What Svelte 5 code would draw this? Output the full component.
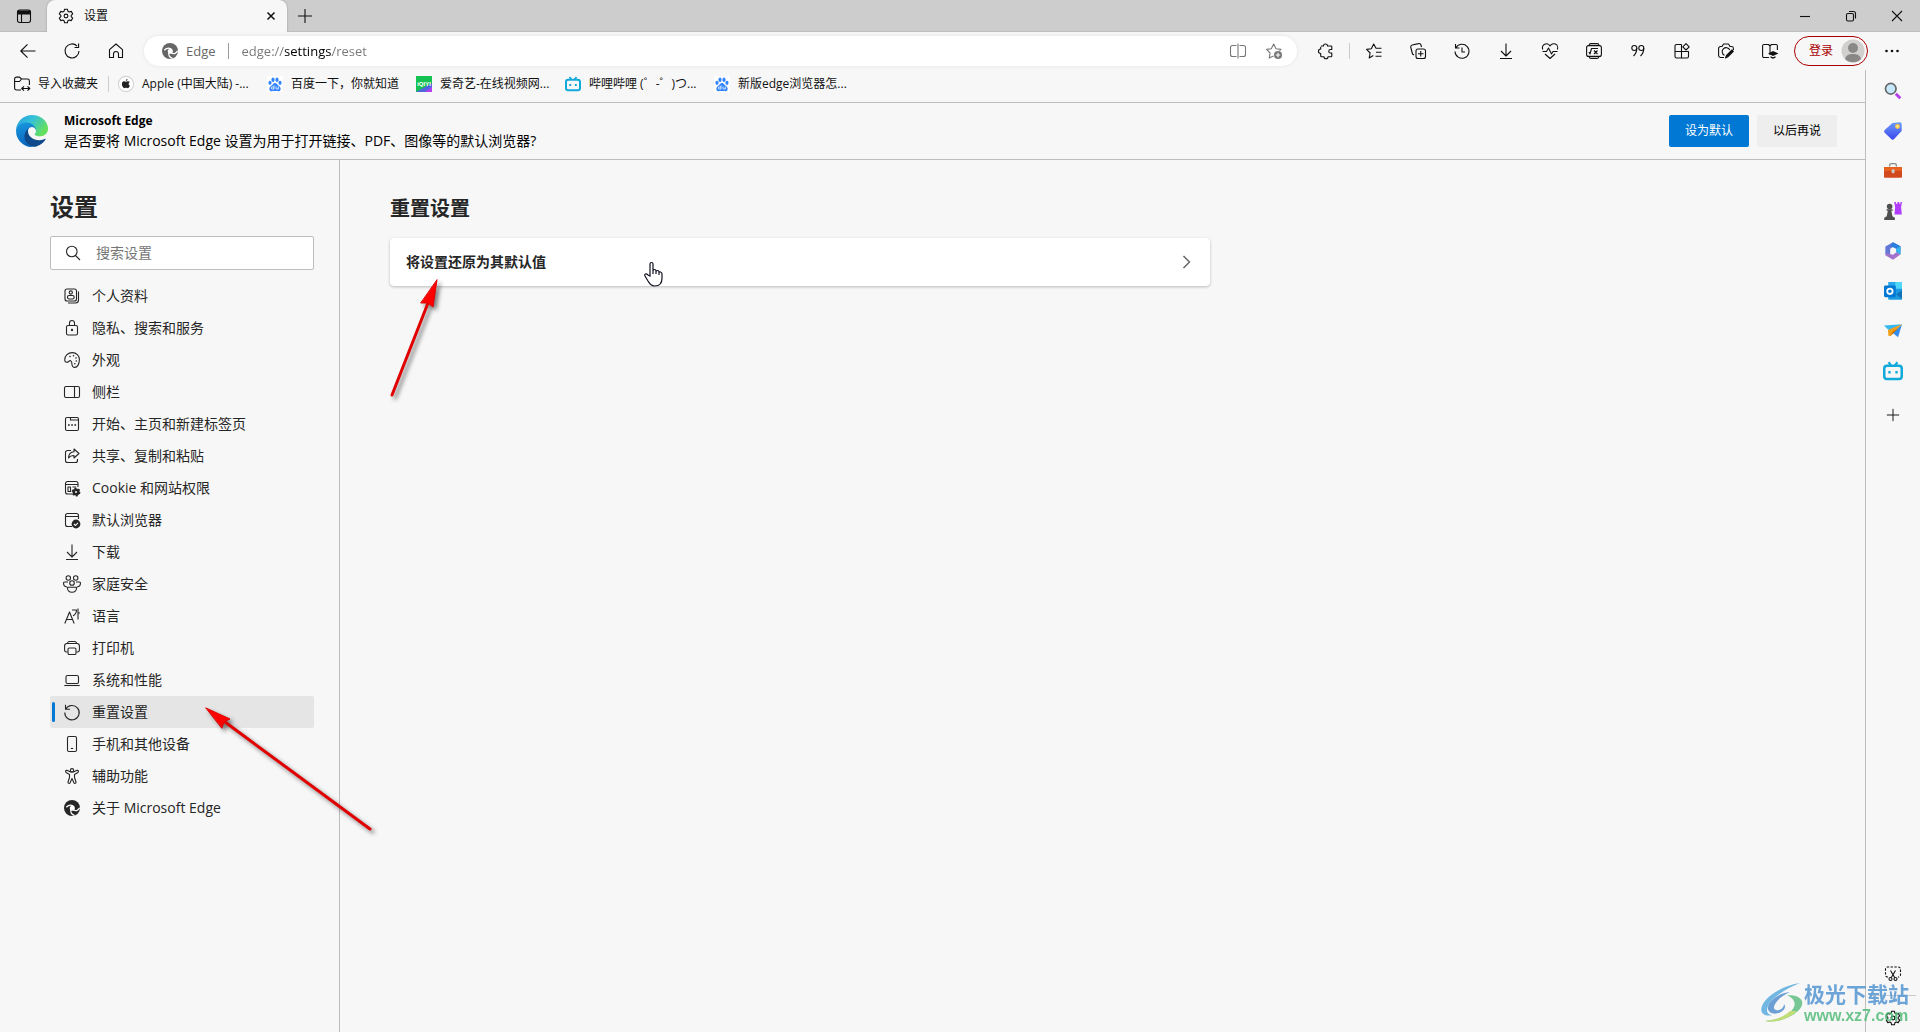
<script lang="ts">
  const icons: Record<string, string> = {
    tabs: '<rect x="1.5" y="2" width="13" height="12.5" rx="2.2"/><path d="M2 3h12v3H2z" fill="currentColor"/><path d="M5.5 6v8.5"/>',
    gear: '<path d="M6.6 1.2h2.8l.5 2 1.3.8 2-.6 1.5 2.5-1.5 1.4v1.4l1.5 1.4-1.5 2.5-2-.6-1.3.8-.5 2H6.6l-.5-2-1.3-.8-2 .6-1.5-2.5 1.5-1.400V7.300L1.300 5.900l1.500-2.500 2 .6 1.300-.8z"/><circle cx="8" cy="8" r="1.9"/>',
    close: '<path d="M4.500 4.500l7 7M11.500 4.500l-7 7" stroke-width="1.500"/>',
    plus: '<path d="M8 1v14M1 8h14"/>',
    minimize: '<path d="M3 8.500h10"/>',
    restore: '<rect x="3.500" y="5.500" width="7" height="7.500" rx="1.500"/><path d="M6 3.500h4.500a2 2 0 0 1 2 2v5"/>',
    exit: '<path d="M3 3l10 10M13 3L3 13"/>',
    back: '<path d="M15.500 8H.8M7.500 1.300L.8 8l6.700 6.700"/>',
    refresh: '<path d="M15 8a7 7 0 1 1-2-5M14.600.5v4h-4"/>',
    home: '<path d="M1.500 6.600L8 1l6.500 5.600v7.900h-4V11a2.500 2.500 0 0 0-5 0v3.500h-4z"/>',
    split: '<path d="M6.500 2.500h-4a2 2 0 0 0-2 2v7a2 2 0 0 0 2 2h4M9.500 2.500h4a2 2 0 0 1 2 2v7a2 2 0 0 1-2 2h-4M8 .5v15"/>',
    starAdd: '<path d="M7.500 13l-4.300 2 .9-5L.6 6.400l4.700-.7L7.700 1 10 5.700l5 .7-1.500 1.300"/><circle cx="12" cy="12" r="4" fill="currentColor" stroke="none"/><path d="M12 9.800v4.400M9.800 12h4.400" stroke="#fff"/>',
    puzzle: '<path d="M4 3h2.500a2 2 0 0 1 4 0H14a.8.8 0 0 1 .8.8V6.500h-1.300a1.700 1.700 0 0 0 0 3.500h1.300v3a.8.8 0 0 1-.8.800h-3a2 2 0 0 1-4 0H4.500a.8.800 0 0 1-.8-.8v-2.500a2.200 2.200 0 0 1 0-4.500V3.800"/>',
    starList: '<path d="M7.300 12.500L3.200 15l.9-5L.6 6.400l4.700-.7L7.700 1 10 5.300h5.500M10 9.300h5.500M9.500 13.300h6"/>',
    collections: '<rect x="6" y="6" width="9.500" height="9.500" rx="2"/><path d="M10.750 8v5.500M8 10.750h5.500M4 12l-1.500-1L.8 4.500A2 2 0 0 1 2.200 2L8.500.6A2 2 0 0 1 11 2l.5 2"/>',
    history: '<path d="M1.500 1v4h4M1.800 5A7 7 0 1 1 1 8.500M8 4.500V9h3"/>',
    download: '<path d="M8 .5v12M3 8l5 5 5-5M2 15.500h12"/>',
    heart: '<path d="M.8 6.500A4 4 0 0 1 8 3a4 4 0 0 1 7.300 3.500M.5 8.500h4L6.500 5l3 6L11 8.500h4.500M3 11l5 4.500 5-4.500"/>',
    math: '<rect x=".6" y="2.600" width="14.800" height="10.800" rx="2"/><path d="M3 2.500A2 2 0 0 1 5 .6h6a2 2 0 0 1 2 1.900M3 13.500a2 2 0 0 0 2 1.900h6a2 2 0 0 0 2-1.900M3 9l1 2 1.500-5.500H12M8 7.500l3.500 3.500M11.500 7.500L8 11"/>',
    quote: '<circle cx="4.300" cy="5" r="2.500"/><path d="M6.800 5c0 4-1 6-3.300 8"/><circle cx="11.300" cy="5" r="2.500"/><path d="M13.800 5c0 4-1 6-3.300 8"/>',
    apps: '<path d="M7.500 1.500h-5a1.500 1.500 0 0 0-1.500 1.500v10.500A1.500 1.500 0 0 0 2.500 15H13a1.500 1.500 0 0 0 1.500-1.500v-5H1M7.500 1.500V15M12 .6l3.200 3.200L12 7 8.800 3.800z"/>',
    camera: '<path d="M6 14.500H2.500A1.900 1.900 0 0 1 .6 12.600V5.400a1.900 1.900 0 0 1 1.900-1.900H4L5.500 1h5L12 3.500h1.500a1.900 1.900 0 0 1 1.900 1.900V7M6.500 12.300A4 4 0 1 1 11.800 7"/><path d="M7.500 15l1-2.500L14 7l1.300 1.300-5.500 5.500z" fill="currentColor"/>',
    book: '<path d="M7 14.500H2a1.400 1.400 0 0 1-1.400-1.400V2.900A1.400 1.400 0 0 1 2 1.500h4.500L8 3l1.500-1.500H14a1.400 1.400 0 0 1 1.400 1.400V7M8 3v9"/><path d="M11 8l5.500 2.500L11 13l-5-2.500zM8.500 13.200l2.500 1 2.500-1v1.500l-2.500 1-2.500-1z" fill="currentColor" stroke="none"/>',
    dots: '<g fill="currentColor" stroke="none"><circle cx="2.500" cy="8" r="1.300"/><circle cx="8" cy="8" r="1.300"/><circle cx="13.500" cy="8" r="1.300"/></g>',
    folder: '<path d="M7 14H2.500A1.900 1.900 0 0 1 .6 12V3a1.900 1.900 0 0 1 1.900-1.900h3L7.500 3h6a1.900 1.900 0 0 1 1.900 1.900V9M.6 5.500h4.900L7.500 3M8 12.500h7.500M10 10.300L7.700 12.500l2.300 2.200M13.500 10.300l2.300 2.200-2.300 2.200"/>',
    search: '<circle cx="6.800" cy="6.500" r="5.300"/><path d="M10.500 10.500L15 15"/>',
    profile: '<rect x="1" y="1" width="11.500" height="12" rx="2"/><circle cx="6.800" cy="4.500" r="1.600"/><rect x="3.500" y="7.500" width="6.600" height="3.500" rx="1.500"/><path d="M14.500 3.500V12a3 3 0 0 1-3 3H4"/>',
    lock: '<rect x="2.500" y="5.500" width="11" height="9.500" rx="1.500"/><path d="M5.500 5.500V3a2.500 2.500 0 0 1 5 0v2.500"/><circle cx="8" cy="10" r=".6" fill="currentColor"/>',
    palette: '<path d="M.7 8C.7 3.800 4 .6 8.300.6c4 0 7.100 3 7.100 7 0 4.300-2 7.800-4.600 7.800-3.300 0-2.800-2.800-3-4.500C7.500 8.300 6 8 4.700 9.500 3.300 11 .7 10.300.7 8z"/><g fill="currentColor" stroke="none"><circle cx="6" cy="4.500" r=".8"/><circle cx="9.500" cy="3.800" r=".8"/><circle cx="12" cy="6" r=".8"/><circle cx="12.300" cy="9" r=".8"/><circle cx="10.800" cy="11.800" r=".8"/></g>',
    panel: '<rect x=".5" y="2.500" width="15" height="11" rx="1.500"/><path d="M10.500 2.500v11"/>',
    startPage: '<rect x="1.500" y="1.500" width="13" height="13" rx="1.500"/><path d="M6.500 1.500v2.500h8"/><path d="M4 9h1.700M7.200 9h1.700M10.400 9h1.700" stroke-width="1.700"/>',
    share: '<path d="M7 2.500H3.500a2 2 0 0 0-2 2v8a2 2 0 0 0 2 2h8a2 2 0 0 0 2-2V11M10 1l5 4.500-5 4.500V7.500C7 7.500 5.500 8.500 4.500 10c0-3.500 2-6 5.500-6.300z"/>',
    cookie: '<path d="M8 14H3.500a2 2 0 0 1-2-2V3.500a2 2 0 0 1 2-2H12a2 2 0 0 1 2 2V7M1.500 4.500H14"/><path d="M4 7h2.500v4.500H4zM8.500 7H12"/><circle cx="12" cy="12" r="3" fill="currentColor"/><circle cx="12" cy="12" r="3.400" stroke-dasharray="1.780 1.780" stroke-width="2"/><circle cx="12" cy="12" r="1" fill="#f7f7f7" stroke="none"/>',
    browser: '<path d="M8 14.500H3.500a2 2 0 0 1-2-2v-9a2 2 0 0 1 2-2h9a2 2 0 0 1 2 2V7M1.500 4.500h13"/><circle cx="12" cy="12" r="4.400" fill="currentColor" stroke="none"/><path d="M10 12l1.500 1.500L14 10.800" stroke="#f7f7f7"/>',
    family: '<circle cx="4.300" cy="2" r="2.200"/><circle cx="11.700" cy="2" r="2.200"/><circle cx="8" cy="7" r="2.300"/><path d="M4 6H.5a1 1 0 0 0-1 1c0 2.200 1.300 3.700 3.500 4M12 6h3.500a1 1 0 0 1 1 1c0 2.200-1.300 3.700-3.500 4M3.500 11.300h9c.5 2.800-1.500 4.900-4.500 4.900s-5-2.100-4.500-4.900z"/>',
    language: '<path d="M.8 15.500L5.500 4l4.700 11.500M2.500 11.500h6M8 2h4.500c0 2.700-1.300 4.800-3.500 5.800M14 .5v11M14 5h2"/>',
    printer: '<path d="M3.500 12H2.400A1.900 1.900 0 0 1 .6 10V6A2.500 2.500 0 0 1 3 3.500h10A2.500 2.500 0 0 1 15.400 6v4a1.900 1.900 0 0 1-1.900 2h-1M3.500 3.500A2 2 0 0 1 5.500 1.500h5a2 2 0 0 1 2 2"/><rect x="4" y="8" width="8" height="6.500" rx="1.300"/>',
    laptop: '<rect x="2" y="3.500" width="12.500" height="8" rx="1.500"/><path d="M.3 13.500h15.400"/>',
    reset: '<path d="M1.500.8v4.500H6M1.800 5A7.200 7.200 0 1 1 .8 8.500"/>',
    phone: '<rect x="3.500" y=".5" width="9" height="15" rx="1.500"/><path d="M6.800 12.500h2.400"/>',
    accessibility: '<circle cx="8" cy="2.300" r="1.700"/><path d="M1.600 3.200c.4-1 1.300-.9 2-.6L6.500 4h3l2.900-1.400c.7-.3 1.600-.4 2 .6.200.8-.2 1.200-.9 1.600L10.500 6.500v3l1.500 4.500c.2 1.400-1.500 1.900-2.100.7L8 10.500l-1.900 4.200c-.6 1.200-2.300.7-2.100-.7l1.500-4.500v-3l-3-1.700c-.7-.4-1.100-.8-.9-1.600z"/>',
    edge: '<circle cx="8" cy="8" r="8" fill="currentColor" stroke="none"/><g stroke="#fff" stroke-width="1.300"><circle cx="8.300" cy="8.200" r="1.900" fill="#fff"/><path d="M10 7.300C9 4.500 5 4.300 2.300 7.200M7 9.500c-1 2.500.5 5 3.800 6M9.500 10c2.500 1.300 5 .3 6.100-2.200"/></g>',
    chevron: '<path d="M4.500 2l6 6-6 6" stroke-width="1.500"/>',
    screenshot: '<path d="M3 12H2.500A2 2 0 0 1 .5 10V4a2 2 0 0 1 2-2h11a2 2 0 0 1 2 2v6a2 2 0 0 1-2 2H13" stroke-dasharray="2.400 1.400"/><path d="M5.500 5.500l4.200 7M10.500 5.500l-4.200 7"/><circle cx="5.500" cy="14" r="1.500"/><circle cx="10.500" cy="14" r="1.500"/>',
    apple: '<circle cx="8" cy="8" r="7.600" fill="#fff" stroke="#d4d4d4"/><path d="M9.500 3c-1 .1-1.700.9-1.600 1.900 1 0 1.700-.9 1.600-1.900zM10 5.300c-.9 0-1.300.5-2 .5s-1.200-.5-2-.5C4.700 5.300 3.900 6.500 3.900 8c0 2 1.300 4.200 2.500 4.200.6 0 .9-.4 1.700-.4s1 .4 1.600.4c1 0 1.800-1.300 2.200-2.400-1.700-.8-1.700-3 0-3.700-.5-.6-1.200-.8-1.900-.8z" fill="#222" stroke="none"/>',
    baidu: '<path d="M0 0h16v16H0z" fill="#fff" stroke="none"/><g fill="#3385ff" stroke="none"><ellipse cx="3" cy="6.800" rx="1.600" ry="2.100"/><ellipse cx="6" cy="3.700" rx="1.600" ry="2.200"/><ellipse cx="10" cy="3.700" rx="1.600" ry="2.200"/><ellipse cx="13" cy="6.800" rx="1.600" ry="2.100"/><path d="M8 7c1.700 0 2.300 1.700 3.700 2.800 1.400 1.200 2.200 2.200 1.900 3.600-.4 1.900-2.300 2-3.500 1.700-1.400-.3-2.800-.3-4.200 0-1.200.3-3.100.2-3.500-1.700-.3-1.400.5-2.400 1.900-3.600C5.700 8.700 6.300 7 8 7z"/></g><path d="M7 9.500V13H5.300a1 1 0 0 1 0-2H7M9 10.500v1.800c0 .5.300.7.800.7h1.500v-2.500" stroke="#fff" stroke-width=".8"/>',
    bilibili: '<g stroke="#10a9dc"><path d="M4.500 1l1.800 2.500M11.500 1L9.700 3.500" stroke-width="1.800"/><rect x="1" y="3.800" width="14" height="10.500" rx="2.200" stroke-width="2"/><path d="M5.200 8v2M10.800 8v2" stroke-width="1.900"/></g>',
    magnifier: '<path d="M10.500 10.500l4 4" stroke="#b63cf0" stroke-width="2.600"/><circle cx="6" cy="6" r="4.700" fill="#c5e9fb" stroke="#666" stroke-width="1.500"/>',
    tag: '<path d="M7.500.8L14 .3a1.600 1.600 0 0 1 1.700 1.700v6L9 15.200a1.600 1.600 0 0 1-2.300.1L.6 9.500a1.600 1.600 0 0 1 0-2.300z" fill="url(#blue)" stroke="none"/><circle cx="12" cy="4" r="1.600" fill="#fff0a0" stroke="#ffc43a"/>',
    toolbox: '<path d="M5 4V3a1.500 1.500 0 0 1 1.500-1.500h3A1.500 1.500 0 0 1 11 3v1" stroke="#888" stroke-width="1.200"/><rect x="0" y="4.500" width="16" height="9.500" rx="1" fill="#d1491c" stroke="none"/><path d="M0 4.500h16V8H0z" fill="#e8611f" stroke="none"/><rect x="6.800" y="6.500" width="2.600" height="3.500" rx="1" fill="#ccc" stroke="none"/>',
    games: '<path d="M9 0h1.600v1.500h1.400V0h1.600v1.500h1V0H16l-.8 4.500.6 6.500H9.300l.6-6.500z" fill="#b13dfa" stroke="none"/><g fill="#505050" stroke="none"><circle cx="5" cy="4" r="2.500"/><path d="M2.300 6.500h5.400v1.200H6.500l1 5 2.200 1.300v2H.2v-2l2.200-1.300 1-5H2.300z"/></g>',
    office: '<path d="M8 .2l6.500 3.500v4.500L8 4.500 5.500 6v7.500L1.200 11V4z" fill="#6378d6" stroke="none"/><path d="M8 .2l6.600 3.500v7.500L11 9V5.800L5.500 3.500z" fill="#2b7fdd" stroke="none"/><path d="M14.600 3.700v7.500L11 9V5.800z" fill="#35b5ee" stroke="none"/><path d="M14.600 11.200L8 15.800l-6.800-4 .5-2L8 11.300l3-2.300z" fill="#a272cc" stroke="none"/>',
    outlook: '<g stroke="none"><path d="M4 0h12v15.500H4z" fill="#1a9ae0"/><path d="M4 0h6v8H4z" fill="#28a8ea"/><path d="M10 0h6v6h-6z" fill="#50d5fb"/><path d="M4 10l6-1 6 6.500H4z" fill="#1a9ae0"/><path d="M16 7l-5 4 5 4z" fill="#1271b8"/><rect x="0" y="3" width="10.500" height="10.500" rx="1.200" fill="#0078d4"/></g><circle cx="5.250" cy="8.250" r="2.400" stroke="#fff" stroke-width="1.600"/>',
    drop: '<g stroke="none"><path d="M0 3L16 2 4.500 7.500z" fill="#35b9f0"/><path d="M16 2L12.500 13.500 7 9z" fill="#338df0"/><path d="M3.500 7.200L16 2 5.800 12.500H4z" fill="#f2a018"/><path d="M12 6L5.800 12.500l2-4z" fill="#b96b00"/></g>'
  };

  const tools = ['starList', 'collections', 'history', 'download', 'heart', 'math', 'quote', 'apps', 'camera', 'book'];

  const bookmarks = [
    { icon: 'apple', label: 'Apple (中国大陆) -...' },
    { icon: 'baidu', label: '百度一下，你就知道' },
    { icon: 'iqiyi', label: '爱奇艺-在线视频网...' },
    { icon: 'bilibili', label: '哔哩哔哩 (゜-゜)つ...' },
    { icon: 'baidu', label: '新版edge浏览器怎...' }
  ];

  const sections = [
    { icon: 'profile', label: '个人资料' },
    { icon: 'lock', label: '隐私、搜索和服务' },
    { icon: 'palette', label: '外观' },
    { icon: 'panel', label: '侧栏' },
    { icon: 'startPage', label: '开始、主页和新建标签页' },
    { icon: 'share', label: '共享、复制和粘贴' },
    { icon: 'cookie', label: 'Cookie 和网站权限' },
    { icon: 'browser', label: '默认浏览器' },
    { icon: 'download', label: '下载' },
    { icon: 'family', label: '家庭安全' },
    { icon: 'language', label: '语言' },
    { icon: 'printer', label: '打印机' },
    { icon: 'laptop', label: '系统和性能' },
    { icon: 'reset', label: '重置设置' },
    { icon: 'phone', label: '手机和其他设备' },
    { icon: 'accessibility', label: '辅助功能' },
    { icon: 'edge', label: '关于 Microsoft Edge' }
  ];

  const sideApps = ['magnifier', 'tag', 'toolbox', 'games', 'office', 'outlook', 'drop', 'bilibili'];

  let current = $state('重置设置');
  let query = $state('');
  let address = $state('edge://settings/reset');
</script>

{#snippet icon(name: string)}
  <svg class="icon" viewBox="0 0 16 16" aria-hidden="true">{@html icons[name]}</svg>
{/snippet}

<svg class="defs" aria-hidden="true">
  <defs>
    <linearGradient id="blue" x2="0" y2="1">
      <stop stop-color="#6a9cf8" /><stop offset="1" stop-color="#3b45ee" />
    </linearGradient>
    <linearGradient id="edge-top" x2="1" y2=".5">
      <stop stop-color="#2b9fe0" /><stop offset=".5" stop-color="#35c1d8" /><stop offset="1" stop-color="#66e05c" />
    </linearGradient>
    <linearGradient id="edge-mid" x2=".3" y2="1">
      <stop stop-color="#1a9de2" /><stop offset="1" stop-color="#0a65bd" />
    </linearGradient>
  </defs>
</svg>

<div class="window">
  <header class="titlebar">
    <button class="tab-menu" aria-label="Tab actions">{@render icon('tabs')}</button>
    <div class="tab">
      {@render icon('gear')}
      <span>设置</span>
      <button aria-label="Close tab">{@render icon('close')}</button>
    </div>
    <button class="new-tab" aria-label="New tab">{@render icon('plus')}</button>
    <div class="window-controls">
      <button aria-label="Minimize">{@render icon('minimize')}</button>
      <button aria-label="Restore">{@render icon('restore')}</button>
      <button aria-label="Close">{@render icon('exit')}</button>
    </div>
  </header>

  <div class="toolbar">
    <button class="tool" aria-label="Back">{@render icon('back')}</button>
    <button class="tool" aria-label="Refresh">{@render icon('refresh')}</button>
    <button class="tool" aria-label="Home">{@render icon('home')}</button>
    <div class="address">
      {@render icon('edge')}
      <label for="address">Edge</label>
      <input id="address" bind:value={address} spellcheck="false" />
      <button aria-label="Split screen">{@render icon('split')}</button>
      <button aria-label="Add to favorites">{@render icon('starAdd')}</button>
    </div>
    <button class="tool" aria-label="Extensions">{@render icon('puzzle')}</button>
    <span class="separator"></span>
    {#each tools as tool}
      <button class="tool" aria-label={tool}>{@render icon(tool)}</button>
    {/each}
    <button class="sign-in">
      登录
      <svg viewBox="0 0 24 24" aria-hidden="true">
        <circle cx="12" cy="12" r="11.500" fill="#d2d0ce" />
        <circle cx="12" cy="9" r="5" fill="#8a8886" />
        <path d="M4 20c1-4 4-5 8-5s7 1 8 5a11.500 11.500 0 0 1-16 0z" fill="#8a8886" />
      </svg>
    </button>
    <button class="tool" aria-label="More">{@render icon('dots')}</button>
  </div>

  <div class="body">
    <div class="page">
      <nav class="bookmarks" aria-label="Favorites">
        <a class="import" href="#import">{@render icon('folder')}<span>导入收藏夹</span></a>
        {#each bookmarks as bookmark}
          <a class="bookmark" href="#bookmark">
            {#if bookmark.icon === 'iqiyi'}
              <svg class="icon" viewBox="0 0 16 16" aria-hidden="true">
                <path d="M0 0h16v16H0z" fill="#13c252" stroke="none" />
                <path d="M0 16L16 7v9z" fill="#4f67dc" stroke="none" />
                <path d="M9 16l7-5v5z" fill="#b83df0" stroke="none" />
                <text x="8" y="10" class="iqiyi">iQIYI</text>
              </svg>
            {:else}
              {@render icon(bookmark.icon)}
            {/if}
            <span>{bookmark.label}</span>
          </a>
        {/each}
      </nav>

      <section class="notice">
        <svg class="logo" viewBox="0 0 256 256" aria-hidden="true">
          <path fill="#114a8b" d="M231 190.500c-3.400 1.800-6.900 3.400-10.500 4.700a101.800 101.800 0 0 1-35.900 6.400c-47.300 0-88.500-32.500-88.500-74.300 0-11.400 6.400-21.900 16.400-27.300-42.800 1.800-53.800 46.400-53.800 72.500 0 73.900 68.100 81.400 82.800 81.400 7.900 0 19.800-2.300 27-4.600l1.300-.4a128.300 128.300 0 0 0 66.600-52.800 4 4 0 0 0-5.400-5.600z" />
          <path fill="url(#edge-mid)" d="M105.700 241.400a79.200 79.200 0 0 1-22.700-21.300 80.700 80.700 0 0 1 29.500-120c3.200-1.500 8.500-4.100 15.600-4a32.400 32.400 0 0 1 25.700 13 31.900 31.900 0 0 1 6.300 18.700c0-.2 24.500-79.600-80-79.600-43.900 0-80 41.600-80 78.200a130.200 130.200 0 0 0 12.100 56 128 128 0 0 0 156.400 67 75.500 75.500 0 0 1-62.900-8z" />
          <path fill="url(#edge-top)" d="M152.300 148.900c-.9 1-3.400 2.500-3.400 5.600 0 2.600 1.700 5.100 4.800 7.200 14.400 10 41.500 8.700 41.600 8.700 10.700 0 21.100-2.900 30.300-8.300a61.400 61.400 0 0 0 30.400-52.900c.3-22.400-8-37.300-11.300-43.900C223.500 23.900 177.700 0 128 0A128 128 0 0 0 0 126.200c.5-36.500 36.800-66 80-66 3.500 0 23.500.3 42 10.100 16.300 8.600 24.900 18.900 30.800 29.200 6.200 10.700 7.300 24.100 7.300 29.500 0 5.300-2.700 13.300-7.800 19.900z" />
        </svg>
        <div class="notice-text">
          <strong>Microsoft Edge</strong>
          <p>是否要将 Microsoft Edge 设置为用于打开链接、PDF、图像等的默认浏览器?</p>
        </div>
        <button class="primary">设为默认</button>
        <button>以后再说</button>
      </section>

      <div class="settings">
        <aside>
          <h1>设置</h1>
          <div class="search">
            <label for="search" aria-label="搜索设置">{@render icon('search')}</label>
            <input id="search" placeholder="搜索设置" bind:value={query} />
          </div>
          <nav aria-label="设置">
            {#each sections as section}
              <a
                href="#settings"
                class:selected={section.label === current}
                onclick={() => (current = section.label)}
              >
                {@render icon(section.icon)}
                <span>{section.label}</span>
              </a>
            {/each}
          </nav>
        </aside>
        <main>
          <h2>重置设置</h2>
          <button class="card">
            <span>将设置还原为其默认值</span>
            {@render icon('chevron')}
          </button>
        </main>
      </div>
    </div>

    <aside class="sidebar" aria-label="Sidebar">
      {#each sideApps as app}
        <button class="app" class:wide={app === 'bilibili'} aria-label={app}>{@render icon(app)}</button>
      {/each}
      <button class="add" aria-label="Add">{@render icon('plus')}</button>
      <div class="sidebar-bottom">
        <button aria-label="Screenshot">{@render icon('screenshot')}</button>
        <hr />
        <button aria-label="Settings">{@render icon('gear')}</button>
      </div>
    </aside>
  </div>

  <svg class="annotations" aria-hidden="true">
    <g class="arrow">
      <path d="M392 395L428 303" />
      <path d="M437 280l-4 27-5-4-7 0z" />
    </g>
    <g class="arrow">
      <path d="M370 829L225 722" />
      <path d="M206 708l24 11-6 3-2 6z" />
    </g>
    <path
      class="hand"
      d="M650 276v-12c0-2 3-2 3 0v7c0-2 3-2 3 0v1c0-2 3-2 3 0v1c0-2 3-1 3 1v4c0 5-2 8-7 8-4 0-5-2-7-5l-3-5c-1-2 1-3 3-1zM653 271v3M656 272v2M659 273v2"
    />
  </svg>

  <div class="watermark">
    <svg viewBox="0 0 42 40" aria-hidden="true">
      <path fill="#5badde" d="M39 0C24 2 5 12 1 23c-3 8 4 11 10 9-5-1-6-4-4-9C11 14 26 5 39 0z" />
      <path fill="#5590d0" d="M29 9C17 10 6 19 7 26c1 5 8 6 13 3 4-2 5-6 3-8 0 4-4 7-8 6-6-2 2-13 14-18z" />
      <path fill="#60bf83" d="M26 12c16 0 19 8 11 16C28 36 14 40 4 38c14-1 26-7 29-14 2-5-1-9-7-12z" />
      <path fill="#b9d95f" d="M36 28c-8 8-22 12-32 10 12-1 20-5 25-10z" />
    </svg>
    <div>
      <strong>极光下载站</strong>
      <span>www.xz7.com</span>
    </div>
  </div>
</div>

<style>
  :global(body) {
    margin: 0;
    background: #f7f7f7;
  }

  .window {
    position: relative;
    display: flex;
    flex-direction: column;
    min-height: 100vh;
    overflow: hidden;
    background: #f7f7f7;
    color: #111;
    font: 12px/16px 'Open Sans', 'Noto Sans CJK SC', sans-serif;
  }

  .defs {
    position: absolute;
    width: 0;
    height: 0;
  }

  .icon {
    flex: none;
    width: 16px;
    height: 16px;
    overflow: visible;
    fill: none;
    stroke: currentColor;
    stroke-width: 1.1;
    stroke-linejoin: round;
  }

  button {
    display: flex;
    align-items: center;
    justify-content: center;
    padding: 0;
    border: 0;
    background: none;
    color: inherit;
    font: inherit;
    cursor: pointer;
  }

  a {
    color: inherit;
    text-decoration: none;
  }

  input {
    min-width: 0;
    padding: 0;
    border: 0;
    outline: 0;
    background: none;
    font: inherit;
  }

  .titlebar {
    display: flex;
    height: 31px;
    border-bottom: 1px solid #bdbdbd;
    background: #cdcdcd;
  }

  .tab-menu {
    width: 47px;
  }

  .tab {
    display: flex;
    align-items: center;
    gap: 10px;
    width: 240px;
    height: 32px;
    padding: 0 8px 0 11px;
    border-radius: 8px 8px 0 0;
    box-sizing: border-box;
    background: #f7f7f7;
    box-shadow: 0 0 2px rgba(0, 0, 0, 0.3);
    clip-path: inset(0 -4px 0 -4px);
  }

  .tab button {
    margin-left: auto;
  }

  .new-tab {
    width: 36px;
  }

  .window-controls {
    display: flex;
    margin-left: auto;
  }

  .window-controls button {
    width: 46px;
  }

  .toolbar {
    display: flex;
    align-items: center;
    height: 38px;
    padding: 0 6px;
  }

  .tool {
    flex: none;
    width: 44px;
    height: 30px;
  }

  .address {
    display: flex;
    flex: 1;
    align-items: center;
    height: 30px;
    margin: 0 6px;
    padding: 0 15px 0 18px;
    border-radius: 15px;
    background: #fff;
    box-shadow: 0 0 4px rgba(0, 0, 0, 0.08);
    color: #666;
    font-size: 13px;
  }

  .address label {
    margin: 0 12px 0 8px;
  }

  /* scheme and path are grey, only the host part is black */
  .address input {
    flex: 1;
    padding-left: 13px;
    border-left: 1px solid #999;
    line-height: 16px;
    color: transparent;
    caret-color: #111;
    background: linear-gradient(to right, #767676 56px, #000 56px, #000 103px, #767676 103px);
    -webkit-background-clip: text;
    background-clip: text;
  }

  .address button {
    margin-left: 20px;
    color: #777;
  }

  .separator {
    width: 1px;
    height: 16px;
    margin: 0 2px;
    background: #ccc;
  }

  .sign-in {
    flex: none;
    gap: 8px;
    width: 74px;
    height: 30px;
    margin: 0 2px;
    padding-left: 12px;
    border: 1px solid #a80000;
    border-radius: 15px;
    color: #a80000;
  }

  .sign-in svg {
    width: 24px;
    height: 24px;
  }

  .body {
    display: flex;
    flex: 1;
  }

  .page {
    display: flex;
    flex: 1;
    flex-direction: column;
    min-width: 0;
  }

  .bookmarks {
    display: flex;
    align-items: center;
    gap: 17px;
    height: 33px;
    padding: 0 14px 4px;
    box-sizing: border-box;
    border-bottom: 1px solid #bdbdbd;
    white-space: nowrap;
  }

  .bookmarks a {
    display: flex;
    align-items: center;
    gap: 8px;
  }

  .import {
    width: 94px;
    margin-right: -8px;
    border-right: 1px solid #ccc;
  }

  .bookmark {
    width: 132px;
  }

  .iqiyi {
    fill: #fff;
    stroke: none;
    font: bold 6px 'Liberation Sans', sans-serif;
    text-anchor: middle;
  }

  .notice {
    display: flex;
    align-items: center;
    gap: 8px;
    height: 56px;
    padding: 0 28px 0 16px;
    border-bottom: 1px solid #bdbdbd;
  }

  .logo {
    width: 32px;
    height: 32px;
  }

  .notice-text {
    flex: 1;
    margin-left: 8px;
    line-height: 20px;
    color: #000;
  }

  .notice-text strong {
    display: block;
    font-weight: 700;
  }

  .notice-text p {
    margin: 0;
    font-size: 14px;
  }

  .notice button {
    width: 80px;
    height: 32px;
    border-radius: 2px;
    background: #eee;
    color: #000;
  }

  .notice .primary {
    background: #0078d4;
    color: #fff;
  }

  .settings {
    display: flex;
    flex: 1;
    font-size: 14px;
    line-height: 20px;
    color: #262626;
  }

  .settings aside {
    width: 264px;
    padding: 31px 25px 0 50px;
    border-right: 1px solid #bdbdbd;
  }

  h1,
  h2 {
    margin: 0;
    font-weight: 700;
    line-height: 32px;
  }

  h1 {
    font-size: 24px;
  }

  h2 {
    font-size: 20px;
  }

  .search {
    display: flex;
    align-items: center;
    gap: 15px;
    height: 32px;
    margin: 13px 0 10px;
    padding-left: 14px;
    border: 1px solid #bdbdbd;
    border-radius: 2px;
    background: #fff;
  }

  .search label {
    display: flex;
  }

  .search input {
    flex: 1;
  }

  .search input::placeholder {
    color: #767676;
  }

  .settings nav a {
    position: relative;
    display: flex;
    align-items: center;
    gap: 12px;
    height: 32px;
    padding-left: 14px;
    border-radius: 2px;
  }

  .settings nav .selected {
    background: #e5e5e5;
  }

  .selected::before {
    content: '';
    position: absolute;
    top: 6px;
    left: 2px;
    width: 3px;
    height: 20px;
    border-radius: 2px;
    background: #0078d4;
  }

  main {
    flex: 1;
    padding: 33px 50px 0;
  }

  .card {
    justify-content: space-between;
    width: 100%;
    max-width: 820px;
    height: 48px;
    margin-top: 13px;
    padding: 0 15px 0 16px;
    border-radius: 4px;
    background: #fff;
    box-shadow: 0 1px 3px rgba(0, 0, 0, 0.25);
    font-weight: 600;
  }

  .card .icon {
    color: #666;
  }

  .sidebar {
    display: flex;
    flex-direction: column;
    width: 54px;
    padding-top: 1px;
    border-left: 1px solid #bdbdbd;
  }

  .sidebar button {
    width: 100%;
    height: 40px;
  }

  .app .icon {
    width: 18px;
    height: 18px;
  }

  .wide .icon {
    width: 20px;
    height: 20px;
  }

  .sidebar .add {
    margin-top: 4px;
  }

  .add .icon {
    width: 14px;
    height: 14px;
  }

  .sidebar-bottom {
    margin-top: auto;
  }

  .sidebar-bottom button {
    height: 28px;
  }

  hr {
    margin: 8px 4px;
    border: 0;
    border-top: 1px solid #ccc;
  }

  .annotations {
    position: absolute;
    inset: 0;
    width: 100%;
    height: 100%;
    pointer-events: none;
  }

  .arrow {
    fill: #f00;
    stroke: #e00000;
    stroke-width: 3;
    stroke-linecap: round;
    filter: drop-shadow(3px 3px 2px rgba(0, 0, 0, 0.5));
  }

  .arrow path:last-child {
    stroke-width: 1;
  }

  .hand {
    fill: #fff;
    stroke: #112;
    stroke-width: 1.2;
  }

  .watermark {
    position: absolute;
    right: 11px;
    bottom: 6px;
    display: flex;
    gap: 1px;
    opacity: 0.85;
    pointer-events: none;
  }

  .watermark svg {
    width: 42px;
    height: 42px;
  }

  .watermark strong,
  .watermark span {
    display: block;
  }

  .watermark strong {
    font-size: 21px;
    line-height: 24px;
    color: #5496d3;
  }

  .watermark span {
    font: bold 16px/20px 'Liberation Sans', sans-serif;
    color: #55bd7b;
  }
</style>
